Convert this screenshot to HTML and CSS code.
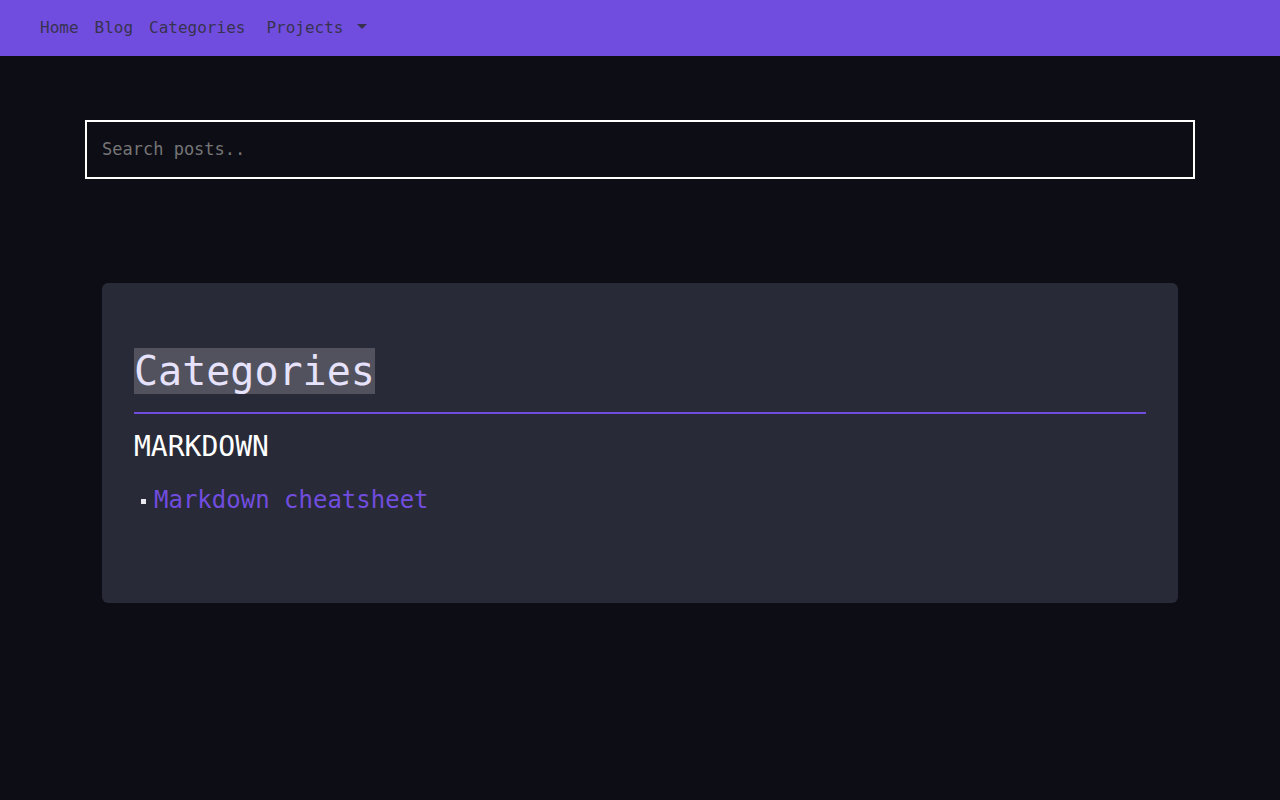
FILE: index.html
```html
<!DOCTYPE html>
<html lang="en">
<head>
<meta charset="utf-8">
<title>Categories</title>
<link rel="stylesheet" href="styles.css">
</head>
<body>
<nav class="navbar">
  <a class="nav-link" href="#">Home</a>
  <a class="nav-link" href="#">Blog</a>
  <a class="nav-link" href="#">Categories</a>
  <a class="nav-link dropdown" href="#">Projects <span class="caret"></span></a>
</nav>
<main class="page">
  <div class="search-wrap">
    <input class="search" type="text" placeholder="Search posts..">
  </div>
  <section class="card">
    <h1 class="title"><span class="title-mark">Categories</span></h1>
    <hr class="rule">
    <h2 class="cat">MARKDOWN</h2>
    <ul class="posts">
      <li class="post"><a href="#">Markdown cheatsheet</a></li>
    </ul>
  </section>
</main>
</body>
</html>
```

FILE: styles.css
```css
* { box-sizing: border-box; }
html, body {
  margin: 0;
  padding: 0;
  background: #0d0d16;
  font-family: "DejaVu Sans Mono", monospace;
  color: #ffffff;
}
.navbar {
  height: 56px;
  background: #714ddf;
  display: flex;
  align-items: center;
  padding-left: 40px;
}
.nav-link {
  color: #37334e;
  text-decoration: none;
  font-size: 16px;
  line-height: 24px;
  margin-right: 16px;
}
.dropdown {
  margin-left: 5px;
  display: flex;
  align-items: center;
}
.caret {
  display: inline-block;
  width: 0;
  height: 0;
  margin-left: 14px;
  border-left: 5px solid transparent;
  border-right: 5px solid transparent;
  border-top: 5px solid #37334e;
  margin-top: -3px;
}
.page {
  padding: 64px 85px 0 85px;
}
.search-wrap { display: flex; }
.search {
  width: 100%;
  height: 59px;
  background: #0d0d16;
  border: 2px solid #ffffff;
  padding: 0 15px 2px 15px;
  font-family: "DejaVu Sans Mono", monospace;
  font-size: 17px;
  color: #ffffff;
  outline: none;
}
.search::placeholder { color: #757575; }
.card {
  margin: 104px 17px 0 17px;
  background: #282a37;
  border-radius: 6px;
  padding: 65px 32px 84px 32px;
  min-height: 320px;
}
.title {
  margin: 0;
  font-size: 40px;
  font-weight: normal;
  line-height: 46px;
}
.title-mark {
  background: #52525e;
  color: #e6e2fb;
}
.rule {
  border: 0;
  height: 2px;
  background: #714ddf;
  margin: 18px 0 0 0;
}
.cat {
  margin: 17px 0 0 0;
  font-family: "DejaVu Sans Mono", monospace;
  font-size: 28px;
  font-weight: normal;
  line-height: 32px;
  color: #ffffff;
}
.posts {
  list-style: none;
  margin: 22px 0 0 0;
  padding: 0 0 0 7px;
}
.post {
  font-family: "DejaVu Sans Mono", monospace;
  font-size: 24px;
  line-height: 30px;
  display: flex;
  align-items: center;
}
.post::before {
  content: "";
  display: inline-block;
  width: 5px;
  height: 5px;
  background: #e8e8ee;
  margin-right: 8px;
  margin-top: 2px;
}
.post a {
  color: #714ddf;
  text-decoration: none;
}
```
